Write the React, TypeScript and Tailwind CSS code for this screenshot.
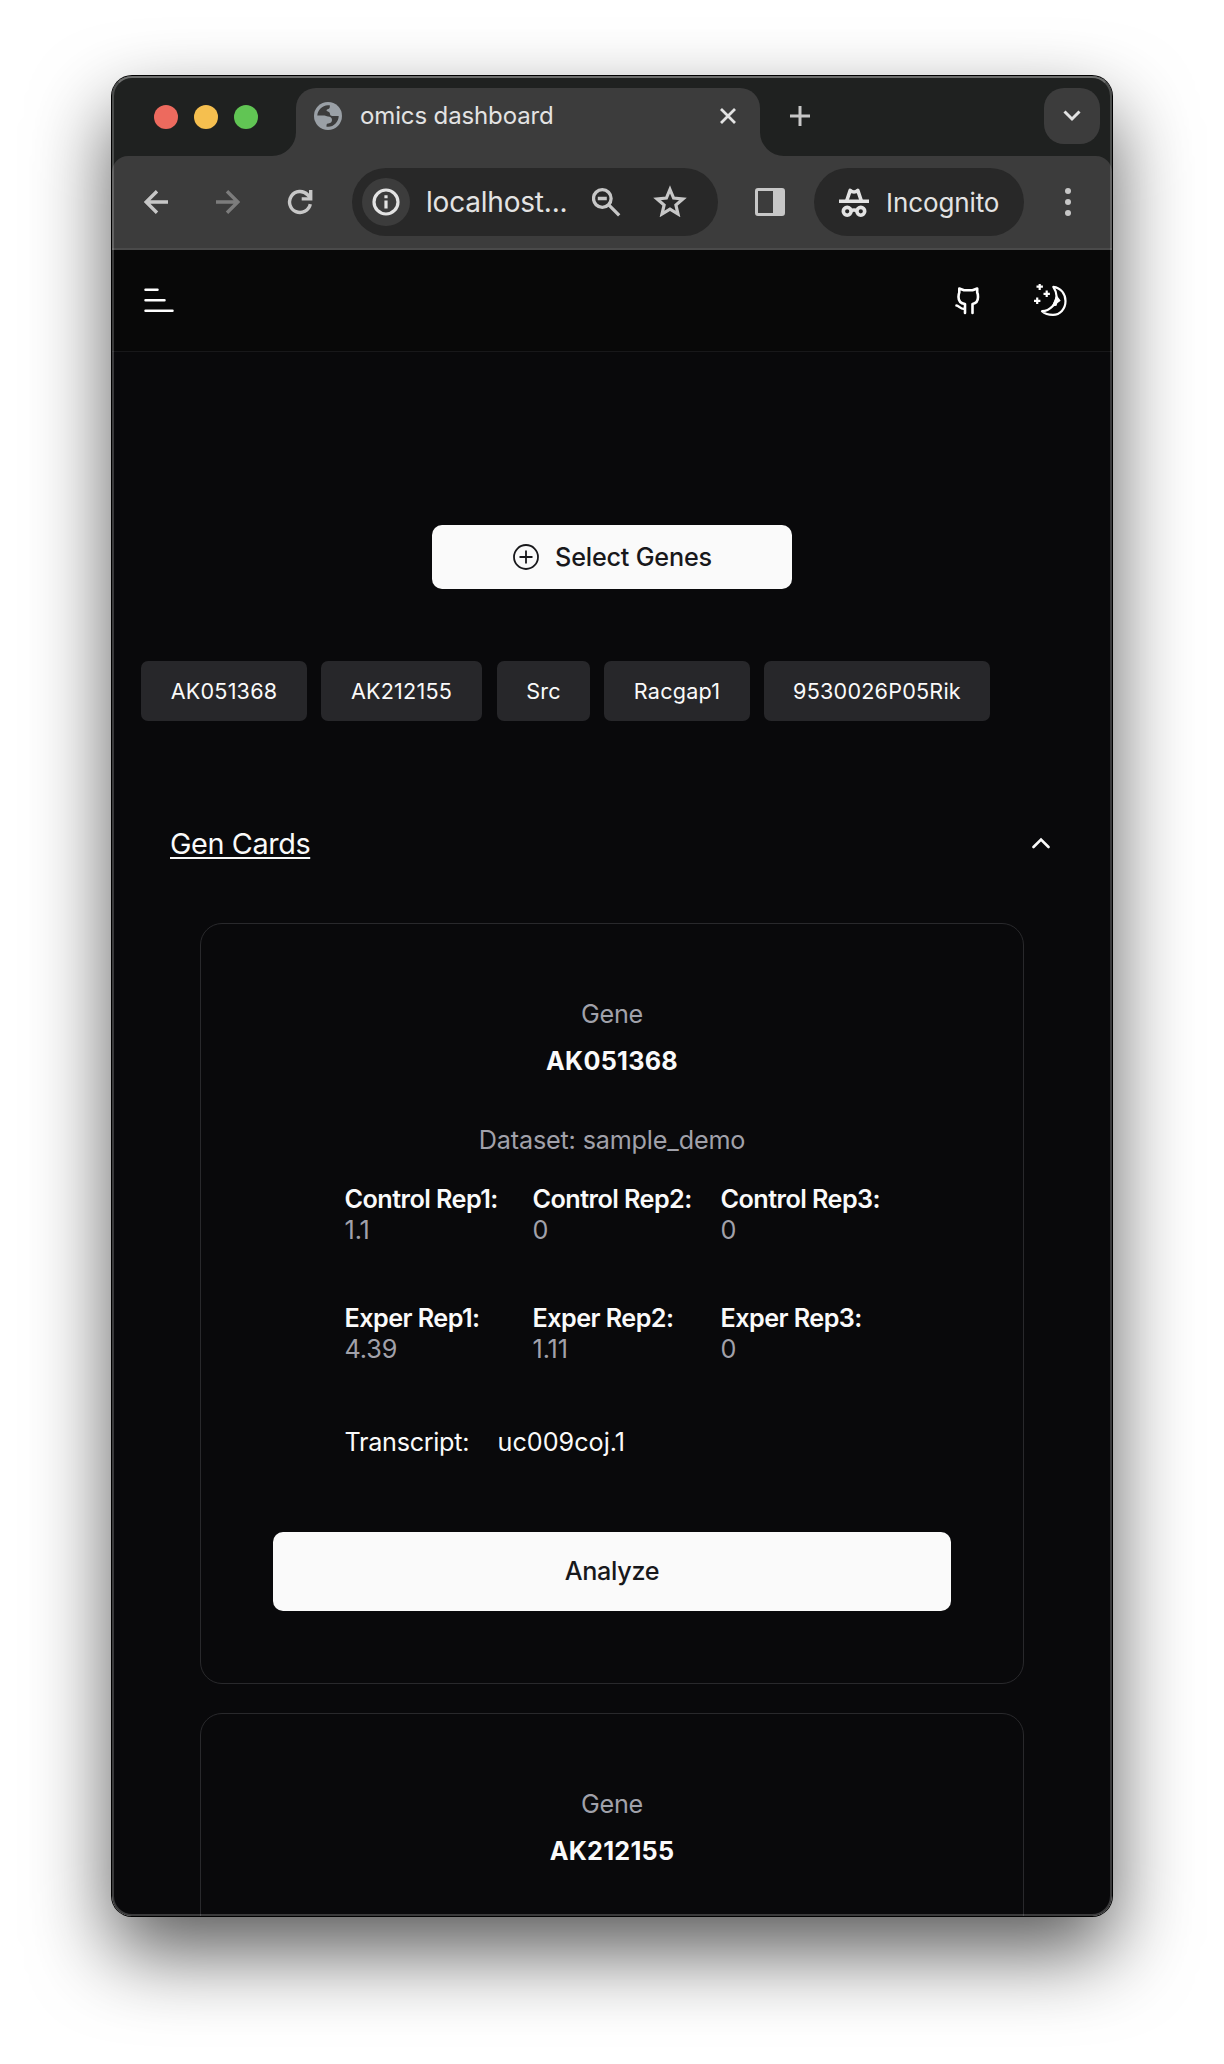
function Globe() {
  return (
    <svg className="mt-[14px] shrink-0" width="28" height="28" viewBox="0 0 28 28">
      <circle cx="14" cy="14" r="14" fill="#9aa0a6" />
      <path d="M3.300 13.600C3.600 8 8 3.400 14 3.200h1.800V5c0 1.200-1 2-2.300 2.200-1.200.3-1.300 1.600-.2 2.100 1.600.7 2.700 1.200 2.700 2.700 0 1.300 1 1.900 2.200 1.900h6.500c0 5.600-4.700 10.700-10.500 10.900h-1.700v-1.700c0-1 .8-1.700 1.900-1.700 2.300 0 3.600-1.300 3.600-3.300 0-2.400-1.500-3.700-4-3.700-1.500 0-2.200-.8-3.500-.8z" fill="#3c3c3c" />
    </svg>
  );
}

function TabStrip() {
  return (
    <div className="flex h-[80px] shrink-0 items-start bg-[#1f2120]">
      <div className="flex gap-[16px] pt-[29px] pl-[42px]">
        <span className="size-[24px] rounded-full bg-[#ed6a5e]" />
        <span className="size-[24px] rounded-full bg-[#f5bf4f]" />
        <span className="size-[24px] rounded-full bg-[#61c554]" />
      </div>
      <div className="relative mt-[12px] ml-[38px] flex h-[68px] w-[464px] rounded-t-[20px] bg-[#3c3c3c] pl-[18px]">
        <svg className="absolute bottom-0 -left-[24px]" width="24" height="24" viewBox="0 0 24 24"><path d="M24 0v24H0A24 24 0 0 0 24 0z" fill="#3c3c3c" /></svg>
        <svg className="absolute -right-[24px] bottom-0" width="24" height="24" viewBox="0 0 24 24"><path d="M0 0v24h24A24 24 0 0 1 0 0z" fill="#3c3c3c" /></svg>
        <Globe />
        <span className="mt-[12px] ml-[18px] grow text-[24px] leading-[32px] tracking-[-0.13px] text-[#e3e3e3]">omics dashboard</span>
        <svg className="mt-[20px] mr-[24px] shrink-0" width="16" height="16" viewBox="0 0 16 16" stroke="#e3e3e3" strokeWidth="2.8"><path d="M1 1l14 14M15 1L1 15" /></svg>
      </div>
      <svg className="mt-[30px] ml-[30px]" width="20" height="20" viewBox="0 0 20 20" stroke="#c7c7c7" strokeWidth="3"><path d="M10 0v20M0 10h20" /></svg>
      <div className="mt-[12px] mr-[12px] ml-auto flex size-[56px] items-center justify-center rounded-[20px] bg-[#3c3c3c]">
        <svg width="18" height="12" viewBox="0 0 18 12" fill="none" stroke="#e3e3e3" strokeWidth="3"><path d="M1.5 1.5L9 9l7.500-7.500" /></svg>
      </div>
    </div>
  );
}

function Toolbar() {
  return (
    <div className="shrink-0 bg-[#1f2120]">
      <div className="flex h-[94px] items-center rounded-t-[16px] border-b-2 border-[#4a4a4a] bg-[#3c3c3c] text-[#c7c7c7]">
        <svg className="ml-[32px]" width="24" height="24" viewBox="0 0 24 24" fill="none" stroke="#c7c7c7" strokeWidth="3.400"><path d="M24 12H3M13 1.200L2.200 12 13 22.800" /></svg>
        <svg className="ml-[48px]" width="24" height="24" viewBox="0 0 24 24" fill="none" stroke="#7c7c7c" strokeWidth="3.400"><path d="M0 12h21M11 1.200L21.800 12 11 22.800" /></svg>
        <svg className="ml-[47px]" width="26" height="26" viewBox="0 0 26 26" fill="none" stroke="#c7c7c7" strokeWidth="3.400"><path d="M23.300 15.200A10.500 10.500 0 1 1 20.600 5.700L23 8.200" /><path d="M23.700 1v8.900h-9" /></svg>
        <div className="ml-[39px] flex h-[68px] w-[366px] shrink-0 items-center rounded-full bg-[#282828] pl-[10px]">
          <span className="flex size-[48px] shrink-0 items-center justify-center rounded-full bg-[#3c3c3c]">
            <svg width="28" height="28" viewBox="0 0 28 28" fill="none" stroke="#e3e3e3" strokeWidth="3.200"><circle cx="14" cy="14" r="12" /><path d="M14 12.400v8M14 7.300v3" /></svg>
          </span>
          <span className="ml-[16px] w-[166px] shrink-0 text-[28px] leading-[36px] tracking-[-0.2px] text-[#e3e3e3]">localhost...</span>
          <svg className="shrink-0" width="29" height="29" viewBox="0 0 29 29" fill="none" stroke="#c7c7c7" strokeWidth="3.300"><circle cx="10.300" cy="10.500" r="8.800" /><path d="M16.500 16.700l10.700 10.700M5.800 10.500h9" /></svg>
          <svg className="-mt-[2px] ml-[32px] shrink-0" width="34" height="32" viewBox="0 0 34 32" fill="none" stroke="#c7c7c7" strokeWidth="3.200"><path d="M17 4.500l3.600 8.600 9.300.8-7 6.100 2.100 9L17 24.200 9 29l2.100-9-7-6.100 9.300-.8z" /></svg>
        </div>
        <svg className="ml-[37px]" width="30" height="28" viewBox="0 0 30 28"><rect x="1.500" y="1.500" width="27" height="25" rx="1.500" fill="none" stroke="#c7c7c7" strokeWidth="3" /><path d="M18 2h10v24H18z" fill="#c7c7c7" /></svg>
        <div className="ml-[29px] flex h-[68px] w-[210px] items-center rounded-full bg-[#282828] pl-[25px] text-[#e3e3e3]">
          <svg width="30" height="29" viewBox="0 0 30 29" fill="none" stroke="#e3e3e3">
            <path d="M0 13.300h30" strokeWidth="3.600" />
            <path d="M7.800 12.500L11.200 2.400q1.900 1.600 3.800 1.600t3.800-1.600L22.200 12.500" strokeWidth="3.600" strokeLinejoin="round" />
            <circle cx="8.200" cy="23.300" r="3.900" strokeWidth="3.600" /><circle cx="21.800" cy="23.300" r="3.900" strokeWidth="3.600" /><path d="M11.500 23q3.500-2 7 0" strokeWidth="3.400" />
          </svg>
          <span className="mt-[2px] ml-[17px] text-[26px] leading-[36px] tracking-[-0.1px]">Incognito</span>
        </div>
        <svg className="ml-[41px]" width="6" height="28" viewBox="0 0 6 28" fill="#c7c7c7"><circle cx="3" cy="3" r="3" /><circle cx="3" cy="14" r="3" /><circle cx="3" cy="25" r="3" /></svg>
      </div>
    </div>
  );
}

function PageHeader() {
  return (
    <div className="flex h-[102px] shrink-0 items-center border-b border-[#18181a] bg-[#080808] pl-[32px]">
      <svg width="30" height="26" viewBox="0 0 30 26" stroke="#fff" strokeWidth="2.500" strokeLinecap="round"><path d="M1.500 1.800h12M1.500 12.300h19M1.500 22.800h27" /></svg>
      <svg className="ml-[780px]" width="26" height="28" viewBox="0 0 26 28" fill="none" stroke="#fff" strokeWidth="2.600" strokeLinecap="round" strokeLinejoin="round">
        <path d="M11 26V17C7 16.500 4.500 14 4.500 10c0-2 .3-3.500.8-4.500v-4L10 3.300h8.500l4.700-1.800v4c.6 1 .8 2.500.8 4.500 0 4-2.500 6.500-5.500 7v9M2.500 18.500c2.500 0 3.500 4 8.500 3.500" />
      </svg>
      <svg className="ml-[53px]" width="34" height="34" viewBox="0 0 34 34" fill="none" stroke="#fff" strokeWidth="2.200" strokeLinejoin="round">
        <path d="M20.300 2.800C28 3.800 32.500 10 32.500 17c0 8-5.500 13.800-12.500 13.800-4.500 0-8.500-1.300-11-3.600C17 27 23.500 20 23.500 12c0-3.500-1.500-6.700-3.200-9.200z" />
        <path d="M23.500 11l4.200 5.800-3.400 2.400-.8 2.600-3 .4-2.500 2.300z" fill="#fff" stroke="none" />
        <path d="M6.700-.5v6.400M3.500 2.700h6.400M13.700 6.600V13M10.500 9.800h6.400M4.200 13.600V20M1 16.800h6.400" />
      </svg>
    </div>
  );
}

const chips = [
  { name: "AK051368", box: "w-[166px]" },
  { name: "AK212155", box: "w-[161px] ml-[14px]" },
  { name: "Src", box: "w-[93px] ml-[15px]" },
  { name: "Racgap1", box: "w-[146px] ml-[14px]" },
  { name: "9530026P05Rik", box: "w-[226px] ml-[14px]" },
];

function Stat({ label, value }: { label: string; value: string }) {
  return (
    <div className="w-[188px] text-[25.2px] leading-[31px]">
      <div className="font-semibold whitespace-nowrap tracking-[-0.55px] text-[#fafafa]">{label}</div>
      <div className="tracking-[-0.1px] text-[#a1a1aa]">{value}</div>
    </div>
  );
}

type Details = { dataset: string; control: string[]; exper: string[]; transcript: string };
type Gene = { name: string; details?: Details };
const genes: Gene[] = [
  { name: "AK051368", details: { dataset: "sample_demo", control: ["1.1", "0", "0"], exper: ["4.39", "1.11", "0"], transcript: "uc009coj.1" } },
  { name: "AK212155" },
];

function GeneDetails({ details }: { details: Details }) {
  return (
    <>
      <div className="mt-[43px] text-center text-[25.2px] leading-[36px] tracking-[-0.17px] text-[#a1a1aa]">Dataset: {details.dataset}</div>
      <div className="mt-[26px] flex pl-[71.500px]">
        {details.control.map((v, i) => <Stat key={i} label={`Control Rep${i + 1}:`} value={v} />)}
      </div>
      <div className="mt-[57px] flex pl-[71.500px]">
        {details.exper.map((v, i) => <Stat key={i} label={`Exper Rep${i + 1}:`} value={v} />)}
      </div>
      <div className="mt-[59px] flex pl-[71.500px] text-[25.2px] leading-[36px] text-[#fafafa]">
        <span className="w-[153px] tracking-[-0.3px]">Transcript:</span>
        <span>{details.transcript}</span>
      </div>
      <button className="mt-[72px] h-[79px] w-full rounded-[10px] bg-[#fafafa] text-[25.2px] font-medium tracking-[-0.3px] text-[#18181b]">Analyze</button>
    </>
  );
}

function GeneCard({ gene }: { gene: Gene }) {
  return (
    <section className="h-[761px] shrink-0 rounded-[22px] border border-[#29292c] px-[72px] pt-[72px]">
      <div className="text-center text-[25.2px] leading-[36px] tracking-[-0.3px] text-[#a1a1aa]">Gene</div>
      <div className="mt-[11px] text-center text-[25.2px] leading-[36px] font-bold tracking-[0.25px] text-[#fafafa]">{gene.name}</div>
      {gene.details && <GeneDetails details={gene.details} />}
    </section>
  );
}

export default function App() {
  return (
    <div className="h-[2064px] w-[1224px] overflow-hidden bg-white pt-[76px] pl-[112px] font-['Inter',sans-serif]">
      <div className="relative flex h-[1840px] w-[1000px] flex-col rounded-[20px] shadow-[0_0_0_1px_#000,0_36px_80px_0_rgba(0,0,0,0.65)]">
        <div className="flex grow flex-col overflow-hidden rounded-[20px] bg-[#09090b]">
          <TabStrip />
          <Toolbar />
          <PageHeader />
          <main className="flex h-0 grow flex-col overflow-hidden">
            <button className="mx-auto mt-[173px] flex h-[64px] w-[360px] shrink-0 items-center justify-center rounded-[10px] bg-[#fafafa] pl-px text-[25.2px] font-medium tracking-[-0.2px] text-[#18181b]">
              <svg className="mr-[16px]" width="26" height="26" viewBox="0 0 26 26" fill="none" stroke="#18181b" strokeWidth="1.800"><circle cx="13" cy="13" r="12" /><path d="M13 6.500v13M6.500 13h13" /></svg>
              <span className="pt-px">Select Genes</span>
            </button>
            <div className="mt-[72px] flex shrink-0 pl-[29px]">
              {chips.map((c) => (
                <span key={c.name} className={`${c.box} flex h-[60px] items-center justify-center rounded-[7px] bg-[#27272a] text-[21.6px] tracking-[0.2px] text-[#fafafa]`}>{c.name}</span>
              ))}
            </div>
            <div className="mt-[104px] flex h-[38px] shrink-0 items-center justify-between pr-[62px] pl-[58px]">
              <h2 className="text-[28.8px] leading-[38px] tracking-[-0.4px] text-[#fafafa] underline decoration-2 underline-offset-[3px]">Gen Cards</h2>
              <svg className="-mt-[2px]" width="18" height="12" viewBox="0 0 18 12" fill="none" stroke="#fafafa" strokeWidth="2.600" strokeLinecap="round"><path d="M1.500 10L9 2.500l7.500 7.500" /></svg>
            </div>
            <div className="mx-[88px] mt-[60px] flex flex-col gap-[29px]">
              {genes.map((g) => <GeneCard key={g.name} gene={g} />)}
            </div>
          </main>
        </div>
        <div className="pointer-events-none absolute inset-0 rounded-[20px] border-2 border-white/20 border-t-white/35" />
      </div>
    </div>
  );
}
